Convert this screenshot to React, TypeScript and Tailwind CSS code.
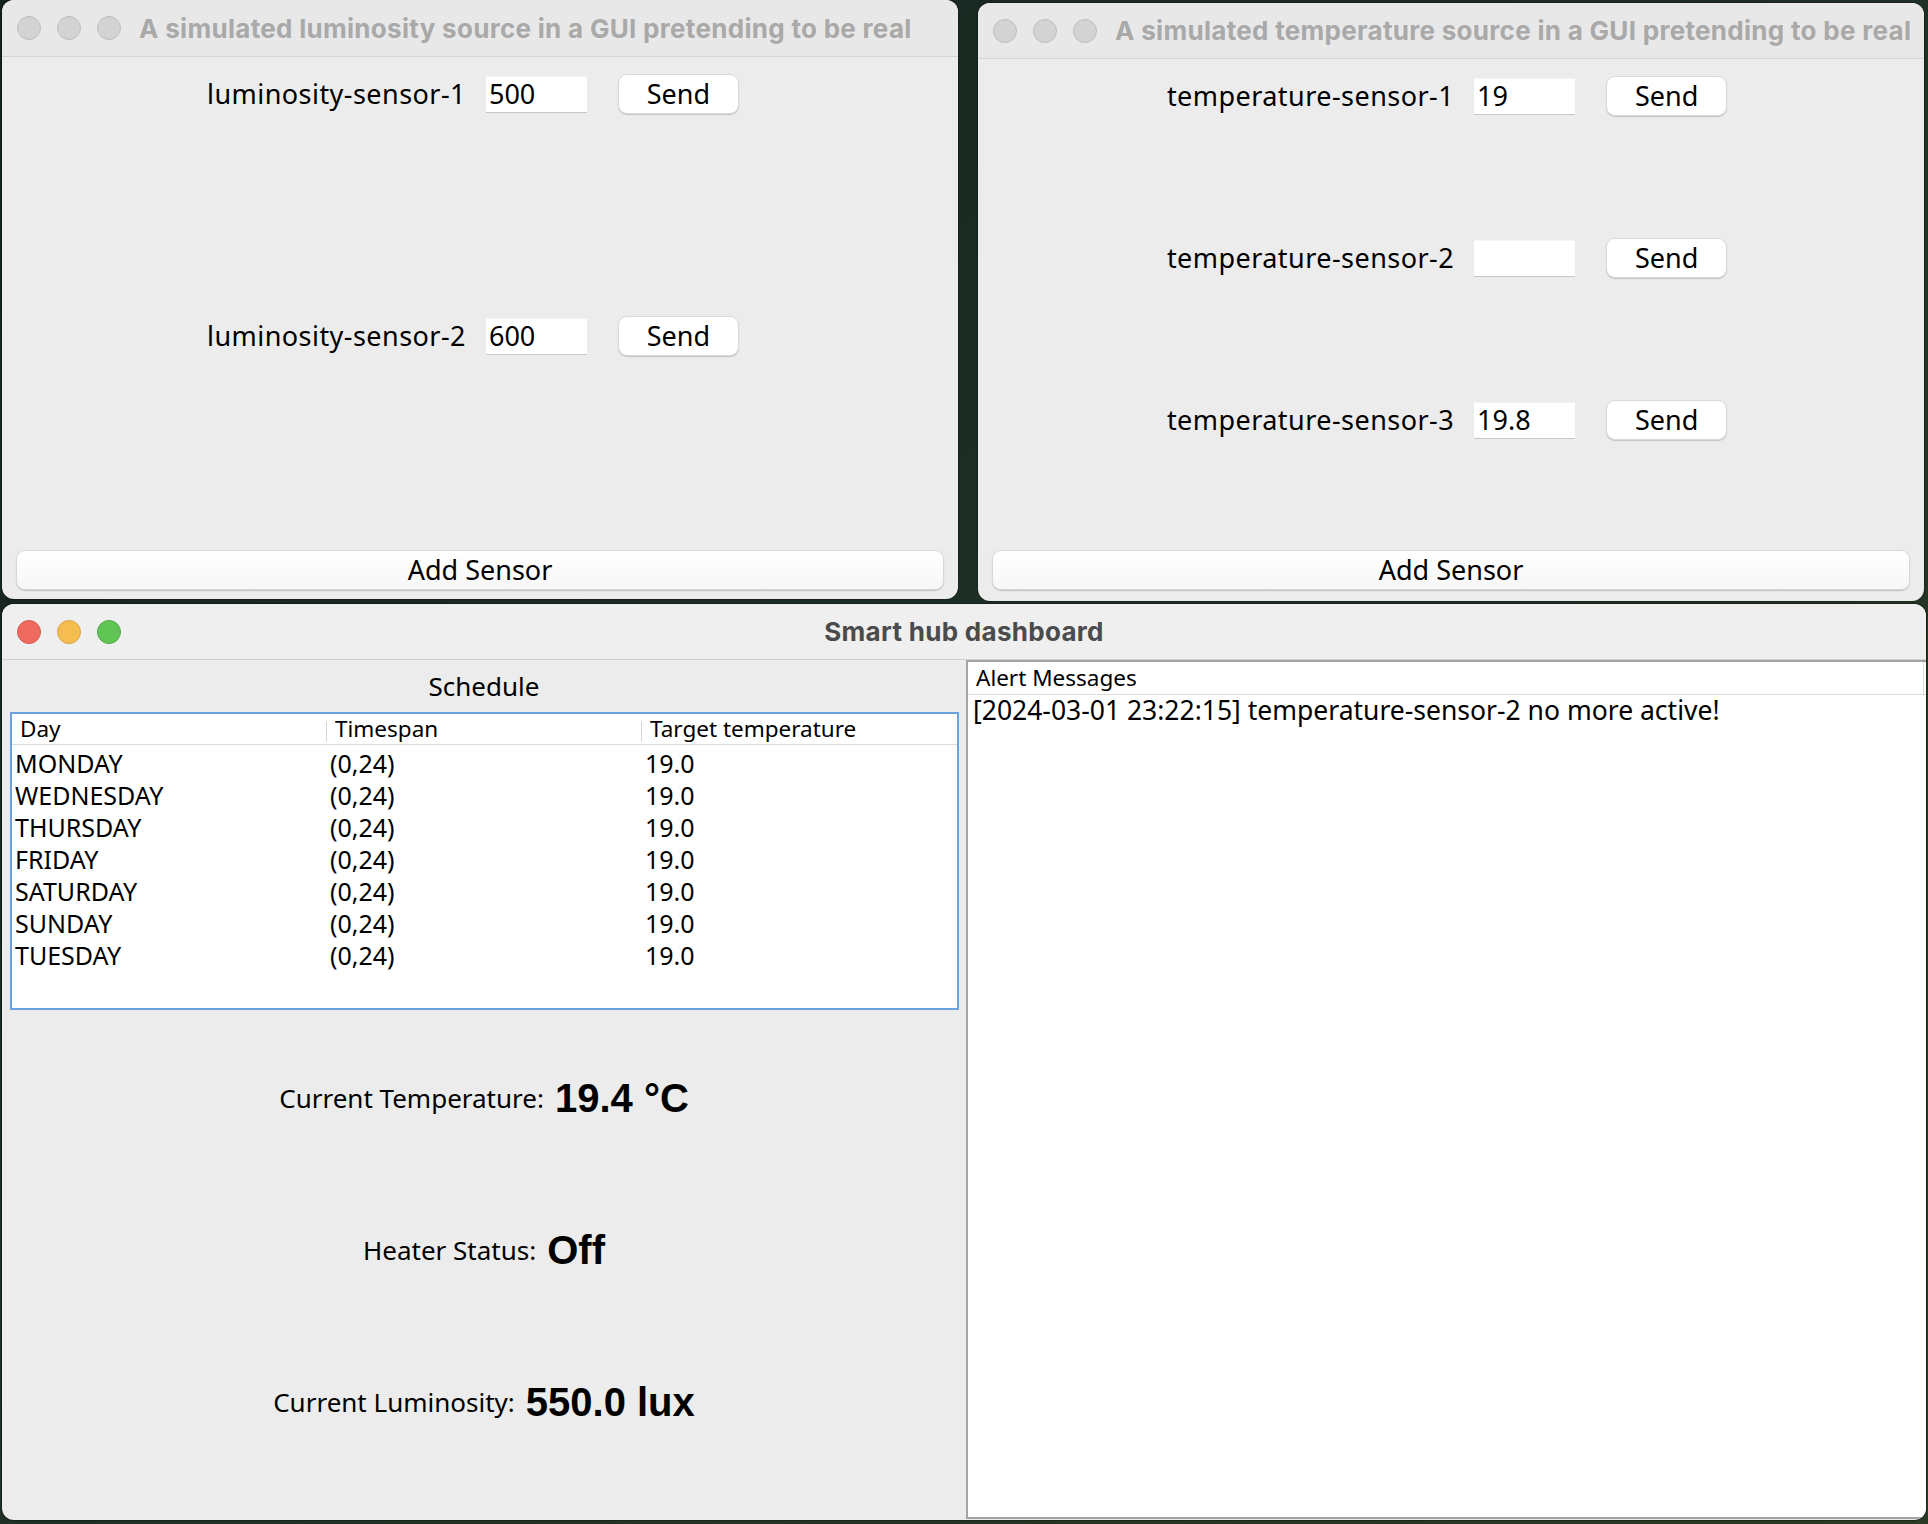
const ui = "font-['Noto_Sans',sans-serif]";
const mac = "font-['Inter',sans-serif]";

const Lights = ({ active }: { active: boolean }) => {
  const dots = active
    ? ["bg-[#ee6a5f] border-[#d85a50]", "bg-[#f5bd4f] border-[#d9a440]", "bg-[#61c555] border-[#50a945]"]
    : ["bg-[#d3d3d3] border-[#bebebe]", "bg-[#d3d3d3] border-[#bebebe]", "bg-[#d3d3d3] border-[#bebebe]"];
  return (
    <div className="flex shrink-0 gap-[16px]">
      {dots.map((c, i) => (
        <span key={i} className={`h-[24px] w-[24px] rounded-full border ${c}`} />
      ))}
    </div>
  );
};

const SensorRow = ({ name, value, height, shift }: { name: string; value: string; height: string; shift: string }) => (
  <div className={`flex items-start justify-center ${height} ${shift}`}>
    <div className="mt-[17px] flex items-center">
      <span className={`${ui} text-[27px] tracking-[0.45px] text-black`}>{name}</span>
      <div className="ml-[20px] flex h-[37px] w-[101px] items-center border-b border-[#c6c6c6] bg-white pl-[3px] shadow-[inset_0_1px_1px_rgba(0,0,0,0.05)]">
        <span className={`${ui} text-[27px] text-black`}>{value}</span>
      </div>
      <button className="ml-[31px] flex h-[40px] w-[121px] items-center justify-center rounded-[9px] border border-[#dadada] bg-white shadow-[0_1px_1px_rgba(0,0,0,0.18)]">
        <span className={`${ui} text-[27px] text-black`}>Send</span>
      </button>
    </div>
  </div>
);

const AddSensor = ({ className }: { className: string }) => (
  <button
    className={`flex h-[40px] shrink-0 items-center justify-center rounded-[9px] border border-[#d8d8d8] bg-gradient-to-b from-white to-[#f7f7f7] shadow-[0_1px_1px_rgba(0,0,0,0.2)] ${className}`}
  >
    <span className={`${ui} text-[27px] text-black`}>Add Sensor</span>
  </button>
);

const SourceWindow = ({
  title,
  rows,
  rowHeight,
  className,
  buttonGap,
  barHeight,
  shift,
}: {
  title: string;
  rows: { name: string; value: string }[];
  rowHeight: string;
  className: string;
  buttonGap: string;
  barHeight: string;
  shift: string;
}) => (
  <div className={`flex flex-col overflow-hidden rounded-[12px] bg-[#ececec] shadow-[0_0_0_1px_rgba(0,0,0,0.25)] ${className}`}>
    <div className={`flex shrink-0 items-center border-b border-[#d4d4d4] bg-[#e8e8e8] pl-[15px] ${barHeight}`}>
      <Lights active={false} />
      <span className={`${mac} ml-[18px] whitespace-nowrap text-[26px] font-bold tracking-[0.3px] text-[#a9a9a9]`}>{title}</span>
    </div>
    <div className="flex flex-col">
      {rows.map((r) => (
        <SensorRow key={r.name} name={r.name} value={r.value} height={rowHeight} shift={shift} />
      ))}
    </div>
    <AddSensor className={`mx-[14px] ${buttonGap}`} />
  </div>
);

const schedule = ["MONDAY", "WEDNESDAY", "THURSDAY", "FRIDAY", "SATURDAY", "SUNDAY", "TUESDAY"];

const HeaderCell = ({ text, divider }: { text: string; divider: boolean }) => (
  <div className="flex items-start justify-between">
    <span className={`${ui} pl-[8px] text-[22.5px] leading-[30px] text-black`}>{text}</span>
    {divider && <span className="mt-[7px] h-[21px] w-px bg-[#d6d6d6]" />}
  </div>
);

const Reading = ({ label, value }: { label: string; value: string }) => (
  <div className="flex h-[152px] items-center justify-center">
    <div className="flex items-center gap-[11px]">
      <span className={`${ui} text-[26px] text-black`}>{label}</span>
      <span className="font-['Liberation_Sans',sans-serif] text-[40px] font-bold text-black">{value}</span>
    </div>
  </div>
);

const Dashboard = () => (
  <div className="flex h-[916px] w-[1924px] flex-col overflow-hidden rounded-[12px] bg-[#ececec] shadow-[0_0_0_1px_rgba(0,0,0,0.3)]">
    <div className="relative flex h-[56px] shrink-0 items-center border-b border-[#d0d0d0] bg-[#efefef] pl-[15px]">
      <Lights active />
      <span className={`${mac} absolute inset-x-0 text-center text-[26px] font-bold tracking-[0.3px] text-[#4b4b4b]`}>Smart hub dashboard</span>
    </div>
    <div className="flex min-h-0 flex-1">
      {/* left: schedule + readings */}
      <div className="flex w-[964px] shrink-0 flex-col">
        <div className="flex h-[52px] items-center justify-center">
          <span className={`${ui} text-[26px] text-black`}>Schedule</span>
        </div>
        <div className="ml-[8px] mr-[7px] flex h-[298px] flex-col border-2 border-[#6aa1de] bg-white">
          <div className="grid h-[31px] grid-cols-3 border-b border-[#dcdcdc]">
            <HeaderCell text="Day" divider />
            <HeaderCell text="Timespan" divider />
            <HeaderCell text="Target temperature" divider={false} />
          </div>
          {schedule.map((d) => (
            <div key={d} className={`grid h-[32px] grid-cols-3 items-center ${ui} text-[25px] text-black`}>
              <span className="pl-[3px]">{d}</span>
              <span className="pl-[3px]">(0,24)</span>
              <span className="pl-[3px]">19.0</span>
            </div>
          ))}
        </div>
        <div className="mt-[12px] flex flex-col">
          <Reading label="Current Temperature:" value="19.4 °C" />
          <Reading label="Heater Status:" value="Off" />
          <Reading label="Current Luminosity:" value="550.0 lux" />
        </div>
      </div>
      {/* right: alerts */}
      <div className="mb-[1px] flex flex-1 flex-col border-2 border-r-0 border-[#a4a4a4] bg-white">
        <div className="flex h-[33px] shrink-0 items-center border-b border-[#dcdcdc]">
          <div className="my-[2px] mr-[2px] flex h-full flex-1 items-center border-r border-[#dcdcdc] pl-[8px]">
            <span className={`${ui} text-[22.5px] text-black`}>Alert Messages</span>
          </div>
        </div>
        <div className="flex h-[32px] items-center pl-[5px]">
          <span className={`${ui} text-[26.5px] text-black`}>[2024-03-01 23:22:15] temperature-sensor-2 no more active!</span>
        </div>
      </div>
    </div>
  </div>
);

export default function App() {
  return (
    <div className="flex h-[1524px] w-[1928px] flex-col overflow-hidden bg-gradient-to-br from-[#14211d] via-[#1f3026] to-[#2a3a24] pl-[2px]">
      <div className="flex h-[604px] shrink-0 items-start">
        <SourceWindow
          title="A simulated luminosity source in a GUI pretending to be real"
          rows={[
            { name: "luminosity-sensor-1", value: "500" },
            { name: "luminosity-sensor-2", value: "600" },
          ]}
          rowHeight="h-[242px]"
          buttonGap="mt-[9px]"
          barHeight="h-[57px]"
          shift="pr-[14px]"
          className="h-[599px] w-[956px]"
        />
        <SourceWindow
          title="A simulated temperature source in a GUI pretending to be real"
          rows={[
            { name: "temperature-sensor-1", value: "19" },
            { name: "temperature-sensor-2", value: "" },
            { name: "temperature-sensor-3", value: "19.8" },
          ]}
          rowHeight="h-[162px]"
          buttonGap="mt-[5px]"
          barHeight="h-[56px]"
          shift="pr-[8px]"
          className="ml-[20px] mt-[3px] h-[598px] w-[946px]"
        />
      </div>
      <Dashboard />
    </div>
  );
}
